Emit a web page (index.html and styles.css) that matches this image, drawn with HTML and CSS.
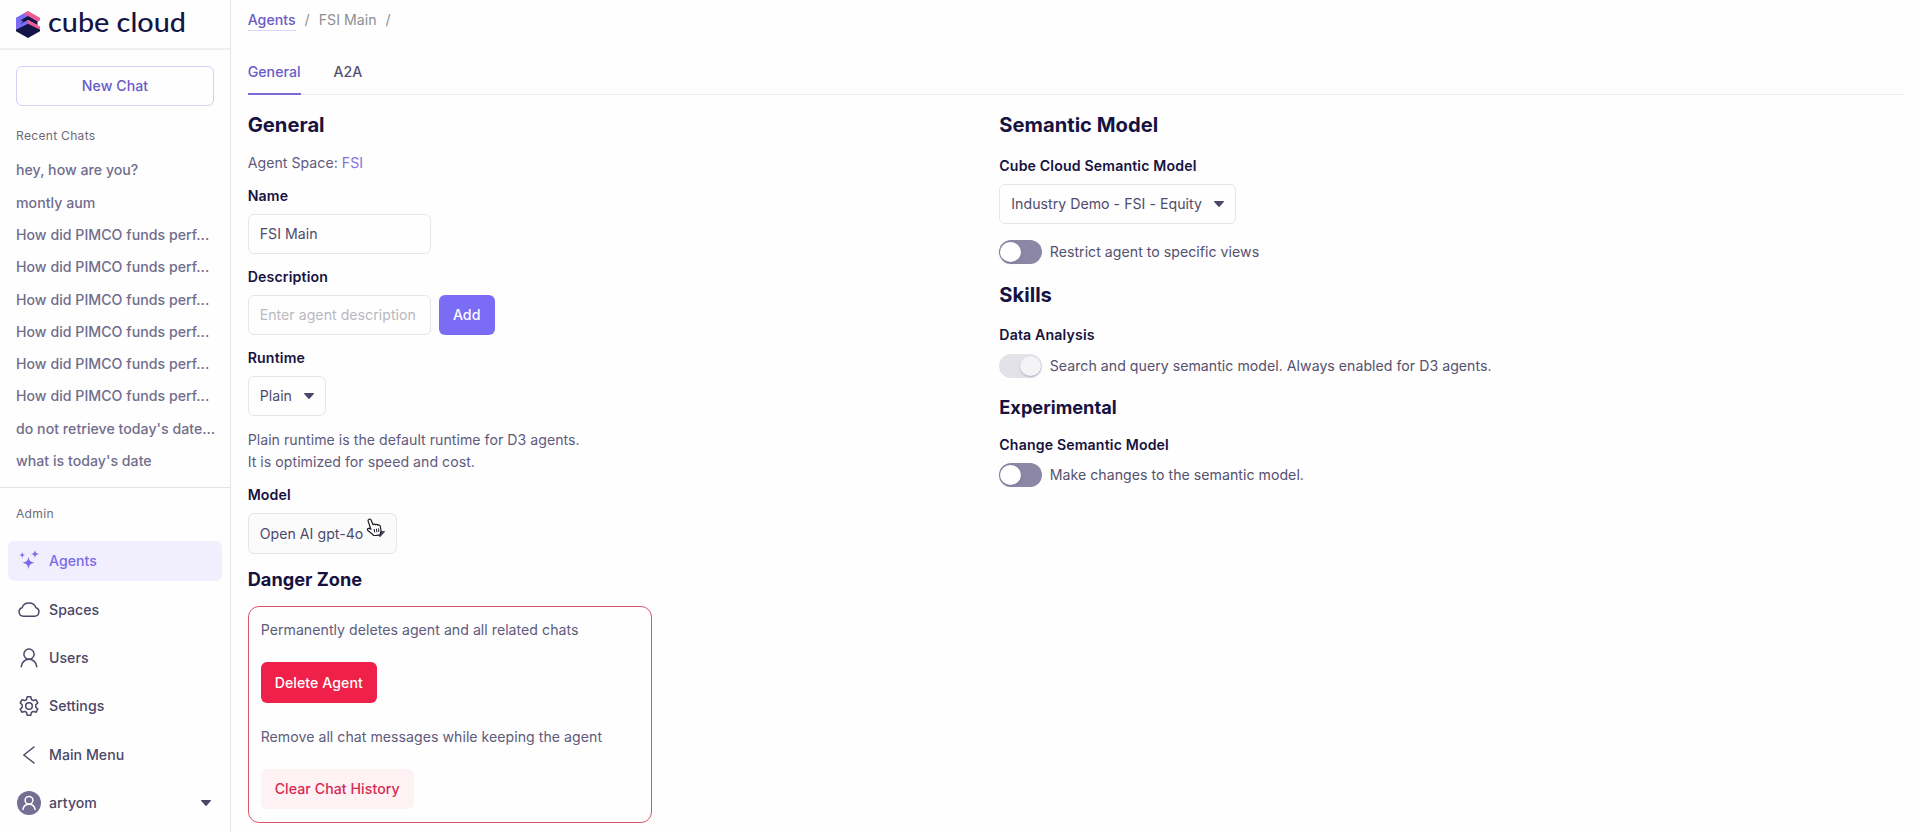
FILE: index.html
```html
<!DOCTYPE html>
<html lang="en">
<head>
<meta charset="utf-8">
<title>Cube Cloud – Agents</title>
<link rel="stylesheet" href="styles.css">
</head>
<body>
<div class="app">
  <aside class="sidebar">
    <div class="brand">
      <svg class="brand-mark" viewBox="0 0 24 27" width="24" height="27">
        <path fill="#7a6cf5" d="M12 0 0 6.700V19l12-6V0z"/>
        <path fill="#ef5b96" d="M12 0l12 6.700v2.600L21.500 11 8 3z"/>
        <path fill="#141446" d="M4.300 9.600 12 5l9.500 5.600v3.700L12 9l-4.500 2.600-3.200 1.800 3-3.400z"/>
        <path fill="#7a6cf5" d="M4.300 13.300 12 9v5L0 20v-4.500z"/>
        <path fill="#ef5b96" d="M12 9l12 6.500V19l-3.500 1L12 14z"/>
        <path fill="#141446" d="M0 18.800l12-6 12 6v1.500L12 27 0 20.300z"/>
      </svg>
      <svg class="brand-name" viewBox="0 0 140 36" width="140" height="36"><text x="0" y="26" textLength="138" lengthAdjust="spacingAndGlyphs">cube cloud</text></svg>
    </div>
    <div class="new-chat-wrap"><button class="btn new-chat">New Chat</button></div>
    <div class="caption recent">Recent Chats</div>
    <nav class="chats">
      <a>hey, how are you?</a>
      <a>montly aum</a>
      <a>How did PIMCO funds perf...</a>
      <a>How did PIMCO funds perf...</a>
      <a>How did PIMCO funds perf...</a>
      <a>How did PIMCO funds perf...</a>
      <a>How did PIMCO funds perf...</a>
      <a>How did PIMCO funds perf...</a>
      <a>do not retrieve today's date...</a>
      <a>what is today's date</a>
    </nav>
    <div class="caption admin">Admin</div>
    <nav class="menu">
      <a class="item active">
        <svg class="icon" viewBox="0 0 24 24"><path fill="currentColor" d="M11.500 7.500c.6 4.300 1.800 5.500 6.500 6.300-4.700.8-5.900 2-6.500 6.700-.6-4.700-1.800-5.900-6.500-6.700 4.700-.8 5.900-2 6.500-6.300zM18 .8c.4 3 1.200 3.800 4.200 4.300-3 .5-3.800 1.300-4.200 4.300-.4-3-1.200-3.800-4.200-4.300 3-.5 3.800-1.300 4.200-4.300zM5.200 2.800c.3 2.300.9 3 3.200 3.300-2.300.4-2.900 1-3.200 3.300-.3-2.300-.9-2.900-3.200-3.300 2.300-.3 2.900-1 3.200-3.300z"/></svg>
        <span>Agents</span></a>
      <a class="item">
        <svg class="icon line" viewBox="0 0 24 24"><path d="M6.300 18.200h11.400a4.300 4.300 0 0 0 1.200-8.400c-.9-2.700-3.600-4.700-6.900-4.700S6 7.100 5.100 9.800a4.300 4.300 0 0 0 1.200 8.400z"/></svg>
        <span>Spaces</span></a>
      <a class="item">
        <svg class="icon line" viewBox="0 0 24 24"><circle cx="12" cy="8.200" r="5.100"/><path d="M4.200 20.700c.4-4.300 3.700-7.400 7.800-7.400s7.400 3.100 7.800 7.400"/></svg>
        <span>Users</span></a>
      <a class="item">
        <svg class="icon line" viewBox="0 0 24 24"><circle cx="12" cy="12" r="3.300"/><path d="M10.200 2.800h3.600l.6 2.700 1.900 1.100 2.600-.9 1.900 3.200-2 1.900v2.400l2 1.900-1.900 3.200-2.600-.9-1.900 1.100-.6 2.700h-3.600l-.6-2.700-1.900-1.100-2.600.9-1.900-3.200 2-1.900v-2.400l-2-1.900 1.900-3.200 2.600.9 1.900-1.100z"/></svg>
        <span>Settings</span></a>
      <a class="item">
        <svg class="icon line" viewBox="0 0 24 24"><path d="M17 4 6.800 12 17 20"/></svg>
        <span>Main Menu</span></a>
      <a class="item">
        <svg class="icon" viewBox="0 0 24 24"><circle cx="12" cy="12" r="12" fill="#746f92"/><g fill="none" stroke="#fff" stroke-width="1.500" stroke-linecap="round"><circle cx="12" cy="9.300" r="3.900"/><path d="M6 18.500c.4-3.200 2.900-5.300 6-5.300s5.600 2.100 6 5.300"/></g></svg>
        <span>artyom</span>
        <svg class="caret user-caret" viewBox="0 0 10 6"><path d="M.7 0h8.600a.6.600 0 0 1 .5 1L5.500 5.700a.7.700 0 0 1-1 0L.2 1A.6.600 0 0 1 .7 0z"/></svg></a>
    </nav>
  </aside>

  <main class="main">
    <div class="breadcrumb"><a>Agents</a><span>/</span><span>FSI Main</span><span>/</span></div>
    <div class="tabs"><a class="tab selected">General</a><a class="tab">A2A</a></div>
    <div class="columns">
      <section class="col">
        <h2 class="h-main">General</h2>
        <p class="text space-line">Agent Space: <a>FSI</a></p>
        <label class="label">Name</label>
        <div class="row"><div class="field">FSI Main</div></div>
        <label class="label">Description</label>
        <div class="row"><div class="field placeholder">Enter agent description</div><button class="btn add">Add</button></div>
        <label class="label">Runtime</label>
        <div class="row"><div class="select">Plain<svg class="caret" viewBox="0 0 10 6"><path d="M.7 0h8.600a.6.600 0 0 1 .5 1L5.500 5.700a.7.700 0 0 1-1 0L.2 1A.6.600 0 0 1 .7 0z"/></svg></div></div>
        <p class="text hint">Plain runtime is the default runtime for D3 agents.<br>It is optimized for speed and cost.</p>
        <label class="label model-select-label">Model</label>
        <div class="row"><div class="select hover">Open AI gpt-4o<svg class="caret" viewBox="0 0 10 6"><path d="M.7 0h8.600a.6.600 0 0 1 .5 1L5.500 5.700a.7.700 0 0 1-1 0L.2 1A.6.600 0 0 1 .7 0z"/></svg>
          <svg class="pointer" viewBox="0 0 17 18" width="17" height="18"><path fill="#fff" stroke="#1b1b22" stroke-width="1.200" stroke-linejoin="round" d="M3.100 1.300c.9-.4 1.700.1 2.100 1L7 6.700c.6-.9 1.900-.9 2.400.1.700-.8 2-.6 2.400.4.900-.6 2.100-.1 2.400 1l.7 3.200c.4 1.700 0 2.700-.5 3.800l-.3 1.700-6.500.9-.7-1.400-4.700-3.600c-1.500-1.200-.5-2.900 1-2.400l1.700.8-2.700-7.800c-.3-.9 0-1.700.9-2.100z"/><path fill="none" stroke="#1b1b22" stroke-width="1" d="M8.200 11l.5 3.500M10.400 10.700l.5 3.500M12.500 10.400l.4 3.500"/></svg>
        </div></div>
        <h3 class="h-sub danger-title">Danger Zone</h3>
        <div class="danger">
          <p class="text">Permanently deletes agent and all related chats</p>
          <button class="btn delete">Delete Agent</button>
          <p class="text">Remove all chat messages while keeping the agent</p>
          <button class="btn clear">Clear Chat History</button>
        </div>
      </section>
      <section class="col">
        <h2 class="h-main">Semantic Model</h2>
        <label class="label model-label">Cube Cloud Semantic Model</label>
        <div class="row"><div class="select">Industry Demo - FSI - Equity<svg class="caret" viewBox="0 0 10 6"><path d="M.7 0h8.600a.6.600 0 0 1 .5 1L5.500 5.700a.7.700 0 0 1-1 0L.2 1A.6.600 0 0 1 .7 0z"/></svg></div></div>
        <div class="switch-row restrict"><span class="switch"></span><span>Restrict agent to specific views</span></div>
        <h2 class="h-main skills">Skills</h2>
        <label class="label analysis-label">Data Analysis</label>
        <div class="switch-row"><span class="switch locked"></span><span>Search and query semantic model. Always enabled for D3 agents.</span></div>
        <h3 class="h-sub experimental">Experimental</h3>
        <label class="label change-label">Change Semantic Model</label>
        <div class="switch-row"><span class="switch"></span><span>Make changes to the semantic model.</span></div>
      </section>
    </div>
  </main>
</div>
</body>
</html>
```
FILE: styles.css
```css
* { box-sizing: border-box; }
body { margin: 0; background: #fefefe; }
.app {
  display: flex;
  width: 1920px;
  height: 832px;
  overflow: hidden;
  font: 400 14.14px/20px Inter, sans-serif;
  letter-spacing: 0.03px;
  color: #5f5b7d;
}
h2, h3, p { margin: 0; }
button { border: 0; font: inherit; letter-spacing: inherit; }
.btn {
  display: flex;
  align-items: center;
  justify-content: center;
  height: 40.500px;
  padding: 0 14px;
  border-radius: 6px;
  font-weight: 500;
  letter-spacing: 0.070px;
  white-space: nowrap;
}

/* Sidebar */
.sidebar {
  flex: none;
  display: flex;
  flex-direction: column;
  width: 231px;
  border-right: 1px solid #e4e4e8;
  font-weight: 500;
}
.brand {
  display: flex;
  align-items: flex-start;
  height: 50px;
  padding-left: 16px;
  border-bottom: 2px solid #efeff1;
}
.brand-mark { margin-top: 11px; }
.brand-name { margin: 6px 0 0 8px; overflow: visible; }
.brand-name text {
  font: 500 27.500px Lato, sans-serif;
  letter-spacing: 0;
  fill: #141446;
}
.new-chat-wrap { padding: 16px 16px 0; }
.new-chat {
  width: 198px;
  height: 40px;
  background: none;
  border: 1px solid #d3cff6;
  color: #6a5bc8;
}
.caption { padding-left: 16px; font-size: 12.100px; font-weight: 400; letter-spacing: 0.280px; color: #6c6a78; }
.recent { margin-top: 20px; }
.chats { display: flex; flex-direction: column; margin-top: 8.200px; padding-left: 16px; color: #716d8c; }
.chats a { height: 32.330px; line-height: 32.330px; white-space: nowrap; }
.admin { margin-top: 9.500px; padding-top: 16.500px; border-top: 1px solid #e2e2e6; }
.menu { display: flex; flex-direction: column; gap: 8.100px; margin-top: 16.500px; padding-left: 8px; }
.item {
  flex: none;
  display: flex;
  align-items: center;
  width: 214px;
  height: 40.300px;
  padding: 0 11px 0 9px;
  border-radius: 6px;
  color: #4b4768;
}
.item.active { background: #f1effe; color: #7b6be6; }
.icon { width: 24px; height: 24px; margin-right: 8px; }
.line { fill: none; stroke: currentColor; stroke-width: 1.500; stroke-linejoin: round; stroke-linecap: round; }
.caret { width: 10px; height: 6px; fill: #4b4768; }
.user-caret { margin-left: auto; }

/* Page header */
.main { flex: 1; padding: 10px 16px 0 16.700px; }
.breadcrumb { display: flex; gap: 9px; color: #8e8e93; }
.breadcrumb a { height: 21px; border-bottom: 1px solid #d9d4f8; color: #6a5bc8; font-weight: 500; }
.tabs { display: flex; gap: 33px; height: 42px; margin-top: 22px; border-bottom: 1px solid #ececef; }
.tab { height: 42px; line-height: 38px; font-weight: 500; color: #55516f; }
.tab.selected { border-bottom: 2px solid #7b6bd8; color: #6a5bc8; }

/* Agent form */
.columns { display: grid; grid-template-columns: 751.600px 1fr; }
.col { display: flex; flex-direction: column; align-items: flex-start; }
.h-main { margin-top: 15.400px; font-size: 20.200px; line-height: 29px; font-weight: 700; letter-spacing: 0; color: #17123f; }
.h-sub { font-size: 18.200px; line-height: 26px; font-weight: 700; letter-spacing: 0; color: #17123f; }
.space-line { margin-top: 13.600px; }
.space-line a { color: #8474e0; }
.label { margin: 13px 0 8px; font-weight: 600; letter-spacing: 0.150px; color: #17123f; }
.row { display: flex; gap: 8px; height: 40.500px; }
.row + .label { margin-top: 12.500px; }
.field, .select {
  display: flex;
  align-items: center;
  height: 40.500px;
  padding: 0 11px;
  border: 1px solid #e6e6ea;
  border-radius: 6px;
  color: #4f4b6c;
  white-space: nowrap;
}
.field { width: 183px; }
.placeholder { color: #b9b9be; }
.select { gap: 12px; position: relative; }
.hover { background: #fbfbfc; }
.pointer { position: absolute; left: 117.500px; top: 3.500px; }
.add { width: 56px; background: #7a6cf5; color: #fff; }
.hint { margin-top: 12.500px; line-height: 22px; }
.model-select-label { margin-top: 12.500px; }
.danger-title { margin-top: 12px; }
.danger {
  width: 404.500px;
  height: 217px;
  margin-top: 14.500px;
  padding: 13px 12px;
  border: 1px solid #d9566f;
  border-radius: 11px;
}
.delete { margin: 22px 0 24px; background: #ef2049; color: #fff; }
.clear { margin-top: 22px; background: #fef2f4; color: #d62a52; }

.model-label { margin-top: 16.600px; }
.switch-row { display: flex; align-items: center; gap: 8px; height: 24px; color: #55516f; }
.switch { width: 42.500px; height: 24px; padding: 2px 1px; border-radius: 12px; background: #8b87a5; }
.switch::before { content: ""; display: block; width: 21px; height: 20px; border-radius: 50%; background: #fff; box-shadow: 0 1px 3px #4b476840; }
.locked { background: #e3e2e9; }
.locked::before { margin-left: 19.500px; background: #f4f4f7; box-shadow: 0 1px 2px #4b476855; }
.restrict { margin-top: 16px; }
.skills { margin-top: 16px; }
.analysis-label { margin: 16px 0 8.500px; }
.experimental { margin-top: 15.700px; }
.change-label { margin: 15.500px 0 8px; }
```
